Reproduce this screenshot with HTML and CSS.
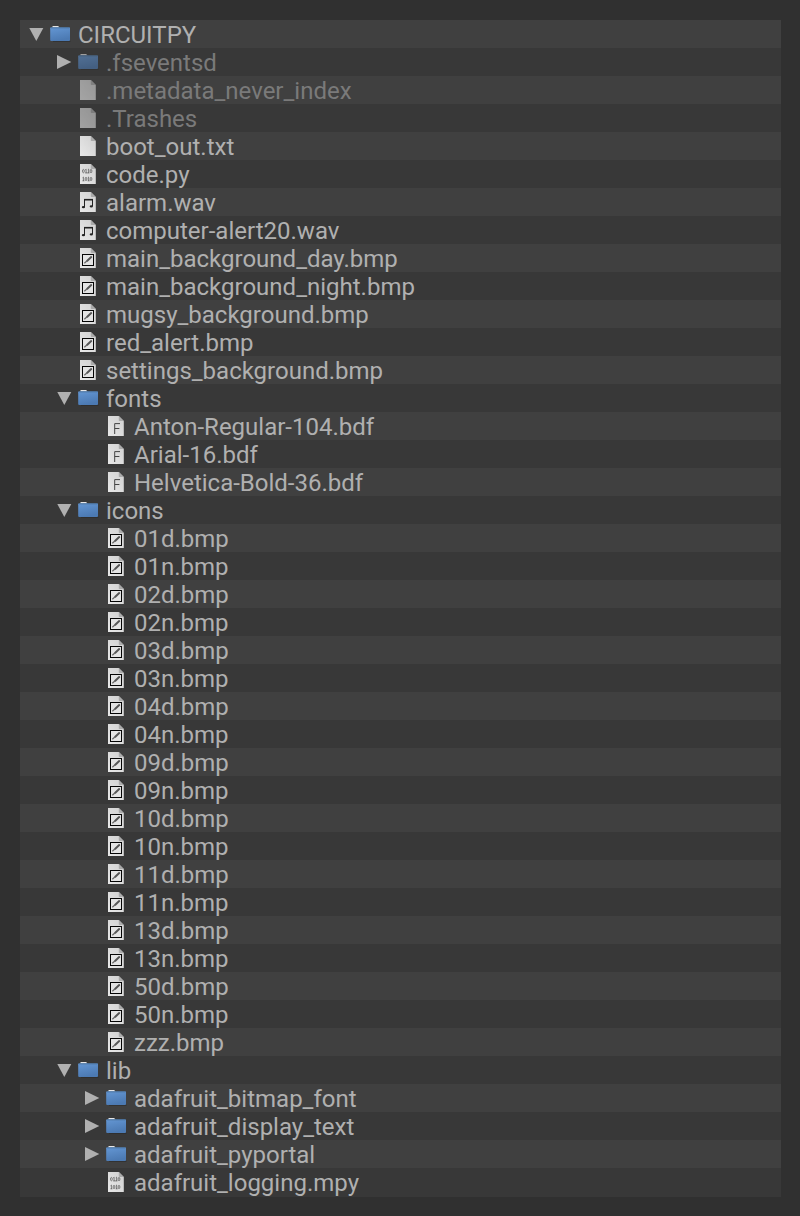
FILE: index.html
```
<!DOCTYPE html>
<html lang="en">
<head>
<meta charset="utf-8">
<title>CIRCUITPY</title>
<link rel="stylesheet" href="styles.css">
</head>
<body>
<svg class="sprites" aria-hidden="true">
  <defs>
    <linearGradient id="blue" x1="0" y1="0" x2="0.3" y2="1"><stop offset="0" stop-color="#6497d4"/><stop offset="1" stop-color="#4c7ab3"/></linearGradient>
    <linearGradient id="paper" x1="1" y1="0" x2="0" y2="1"><stop offset="0" stop-color="#d0d0d0"/><stop offset="1" stop-color="#e8e8e8"/></linearGradient>
  </defs>
  <symbol id="open" viewBox="0 0 28 28"><path d="M7.3 8h14L14.3 21z" fill="#b0b0b0"/></symbol>
  <symbol id="closed" viewBox="0 0 28 28"><path d="M7 7v14l14.3-7z" fill="#b0b0b0"/></symbol>
  <symbol id="folder" viewBox="0 0 28 28">
    <path d="M3 20.8h17.5v.8H3z" fill="#2b2b2b"/>
    <path d="M2.4 8V6.6q0-.6.6-.6h5.2l1.2 1.4V9h-7z" fill="#e6e6e6"/>
    <rect x=".2" y="7.2" width="19.8" height="13.7" rx="1" fill="url(#blue)"/>
    <path d="M1 7.8h18.2" stroke="#466991" stroke-width=".8"/>
  </symbol>
  <symbol id="file" viewBox="0 0 28 28">
    <path d="M2 4H12.8l5 5v15H2z" fill="url(#paper)"/>
    <path d="M12.8 4l5 5h-4.3q-.7 0-.7-.7z" fill="#aaa"/>
  </symbol>
  <symbol id="code" viewBox="0 0 28 28">
    <use href="#file"/>
    <g fill="none" stroke="#555" stroke-width=".7">
      <ellipse cx="5.4" cy="11.1" rx=".9" ry="1.7"/><path d="M8.1 9.1v4M7.3 9.8l.8-.7M10.6 9.1v4M9.8 9.8l.8-.7M7.2 12.9h4.2"/><ellipse cx="13" cy="11.1" rx=".9" ry="1.7"/>
      <path d="M5.4 17v4M4.6 17.7l.8-.7M4.5 20.8h1.9M10.6 17v4M9.8 17.7l.8-.7M9.7 20.8h1.9"/><ellipse cx="8" cy="19" rx=".9" ry="1.7"/><ellipse cx="13" cy="19" rx=".9" ry="1.7"/>
    </g>
  </symbol>
  <symbol id="audio" viewBox="0 0 28 28">
    <use href="#file"/>
    <path d="M6.5 19.3v-7.5h8v6.5" fill="none" stroke="#222" stroke-width="1"/><path d="M6 11.6h9" stroke="#222" stroke-width="1.4"/>
    <ellipse cx="5.4" cy="19.2" rx="1.6" ry="1.1" fill="#222"/><ellipse cx="13.3" cy="18.4" rx="1.6" ry="1.1" fill="#222"/>
  </symbol>
  <symbol id="image" viewBox="0 0 28 28">
    <use href="#file"/>
    <rect x="4.5" y="10.5" width="11" height="11" fill="#e4e4e4" stroke="#050505"/>
    <path d="M9.3 16.7l3.9-3.6" stroke="#555" stroke-width="2" stroke-linecap="round"/><path d="M6.3 19.3l2.8-2.5" stroke="#666" stroke-width="1.2"/>
  </symbol>
  <symbol id="font" viewBox="0 0 28 28">
    <use href="#file"/>
    <path d="M8.7 22V11.6h5.3M8.7 16.5h4.7" fill="none" stroke="#444" stroke-width="1"/>
  </symbol>
</svg>
<main class="tree">
  <div class="row"><svg class="cell"><use href="#open"/></svg><svg class="cell"><use href="#folder"/></svg><span class="name">CIRCUITPY</span></div>
  <div class="row level-1 hidden-item"><svg class="cell"><use href="#closed"/></svg><svg class="cell icon"><use href="#folder"/></svg><span class="name">.fseventsd</span></div>
  <div class="row level-1 hidden-item"><span class="cell"></span><svg class="cell icon"><use href="#file"/></svg><span class="name">.metadata_never_index</span></div>
  <div class="row level-1 hidden-item"><span class="cell"></span><svg class="cell icon"><use href="#file"/></svg><span class="name">.Trashes</span></div>
  <div class="row level-1"><span class="cell"></span><svg class="cell"><use href="#file"/></svg><span class="name">boot_out.txt</span></div>
  <div class="row level-1"><span class="cell"></span><svg class="cell"><use href="#code"/></svg><span class="name">code.py</span></div>
  <div class="row level-1"><span class="cell"></span><svg class="cell"><use href="#audio"/></svg><span class="name">alarm.wav</span></div>
  <div class="row level-1"><span class="cell"></span><svg class="cell"><use href="#audio"/></svg><span class="name">computer-alert20.wav</span></div>
  <div class="row level-1"><span class="cell"></span><svg class="cell"><use href="#image"/></svg><span class="name">main_background_day.bmp</span></div>
  <div class="row level-1"><span class="cell"></span><svg class="cell"><use href="#image"/></svg><span class="name">main_background_night.bmp</span></div>
  <div class="row level-1"><span class="cell"></span><svg class="cell"><use href="#image"/></svg><span class="name">mugsy_background.bmp</span></div>
  <div class="row level-1"><span class="cell"></span><svg class="cell"><use href="#image"/></svg><span class="name">red_alert.bmp</span></div>
  <div class="row level-1"><span class="cell"></span><svg class="cell"><use href="#image"/></svg><span class="name">settings_background.bmp</span></div>
  <div class="row level-1"><svg class="cell"><use href="#open"/></svg><svg class="cell"><use href="#folder"/></svg><span class="name">fonts</span></div>
  <div class="row level-2"><span class="cell"></span><svg class="cell"><use href="#font"/></svg><span class="name">Anton-Regular-104.bdf</span></div>
  <div class="row level-2"><span class="cell"></span><svg class="cell"><use href="#font"/></svg><span class="name">Arial-16.bdf</span></div>
  <div class="row level-2"><span class="cell"></span><svg class="cell"><use href="#font"/></svg><span class="name">Helvetica-Bold-36.bdf</span></div>
  <div class="row level-1"><svg class="cell"><use href="#open"/></svg><svg class="cell"><use href="#folder"/></svg><span class="name">icons</span></div>
  <div class="row level-2"><span class="cell"></span><svg class="cell"><use href="#image"/></svg><span class="name">01d.bmp</span></div>
  <div class="row level-2"><span class="cell"></span><svg class="cell"><use href="#image"/></svg><span class="name">01n.bmp</span></div>
  <div class="row level-2"><span class="cell"></span><svg class="cell"><use href="#image"/></svg><span class="name">02d.bmp</span></div>
  <div class="row level-2"><span class="cell"></span><svg class="cell"><use href="#image"/></svg><span class="name">02n.bmp</span></div>
  <div class="row level-2"><span class="cell"></span><svg class="cell"><use href="#image"/></svg><span class="name">03d.bmp</span></div>
  <div class="row level-2"><span class="cell"></span><svg class="cell"><use href="#image"/></svg><span class="name">03n.bmp</span></div>
  <div class="row level-2"><span class="cell"></span><svg class="cell"><use href="#image"/></svg><span class="name">04d.bmp</span></div>
  <div class="row level-2"><span class="cell"></span><svg class="cell"><use href="#image"/></svg><span class="name">04n.bmp</span></div>
  <div class="row level-2"><span class="cell"></span><svg class="cell"><use href="#image"/></svg><span class="name">09d.bmp</span></div>
  <div class="row level-2"><span class="cell"></span><svg class="cell"><use href="#image"/></svg><span class="name">09n.bmp</span></div>
  <div class="row level-2"><span class="cell"></span><svg class="cell"><use href="#image"/></svg><span class="name">10d.bmp</span></div>
  <div class="row level-2"><span class="cell"></span><svg class="cell"><use href="#image"/></svg><span class="name">10n.bmp</span></div>
  <div class="row level-2"><span class="cell"></span><svg class="cell"><use href="#image"/></svg><span class="name">11d.bmp</span></div>
  <div class="row level-2"><span class="cell"></span><svg class="cell"><use href="#image"/></svg><span class="name">11n.bmp</span></div>
  <div class="row level-2"><span class="cell"></span><svg class="cell"><use href="#image"/></svg><span class="name">13d.bmp</span></div>
  <div class="row level-2"><span class="cell"></span><svg class="cell"><use href="#image"/></svg><span class="name">13n.bmp</span></div>
  <div class="row level-2"><span class="cell"></span><svg class="cell"><use href="#image"/></svg><span class="name">50d.bmp</span></div>
  <div class="row level-2"><span class="cell"></span><svg class="cell"><use href="#image"/></svg><span class="name">50n.bmp</span></div>
  <div class="row level-2"><span class="cell"></span><svg class="cell"><use href="#image"/></svg><span class="name">zzz.bmp</span></div>
  <div class="row level-1"><svg class="cell"><use href="#open"/></svg><svg class="cell"><use href="#folder"/></svg><span class="name">lib</span></div>
  <div class="row level-2"><svg class="cell"><use href="#closed"/></svg><svg class="cell"><use href="#folder"/></svg><span class="name">adafruit_bitmap_font</span></div>
  <div class="row level-2"><svg class="cell"><use href="#closed"/></svg><svg class="cell"><use href="#folder"/></svg><span class="name">adafruit_display_text</span></div>
  <div class="row level-2"><svg class="cell"><use href="#closed"/></svg><svg class="cell"><use href="#folder"/></svg><span class="name">adafruit_pyportal</span></div>
  <div class="row level-2"><span class="cell"></span><svg class="cell"><use href="#code"/></svg><span class="name">adafruit_logging.mpy</span></div>
</main>
</body>
</html>
```
FILE: styles.css
```
body {
  margin: 0;
  padding: 20px 19px 19px 20px;
  background: #303030;
  color: #b0b0b0;
  font-family: Roboto, sans-serif;
  font-size: 24px;
}

.sprites {
  display: block;
  width: 0;
  height: 0;
}

.tree {
  padding-bottom: 1px;
  background: #383838;
}

.row {
  display: flex;
  height: 28px;
  padding-left: 2px;
  line-height: 31px;
  white-space: nowrap;
}

.row:nth-child(odd) {
  background: #404040;
}

.level-1 {
  padding-left: 30px;
}

.level-2 {
  padding-left: 58px;
}

.cell {
  flex: none;
  width: 28px;
  height: 28px;
}

.hidden-item .icon {
  opacity: 0.6;
}

.hidden-item .name {
  color: #7a7a7a;
}
```
